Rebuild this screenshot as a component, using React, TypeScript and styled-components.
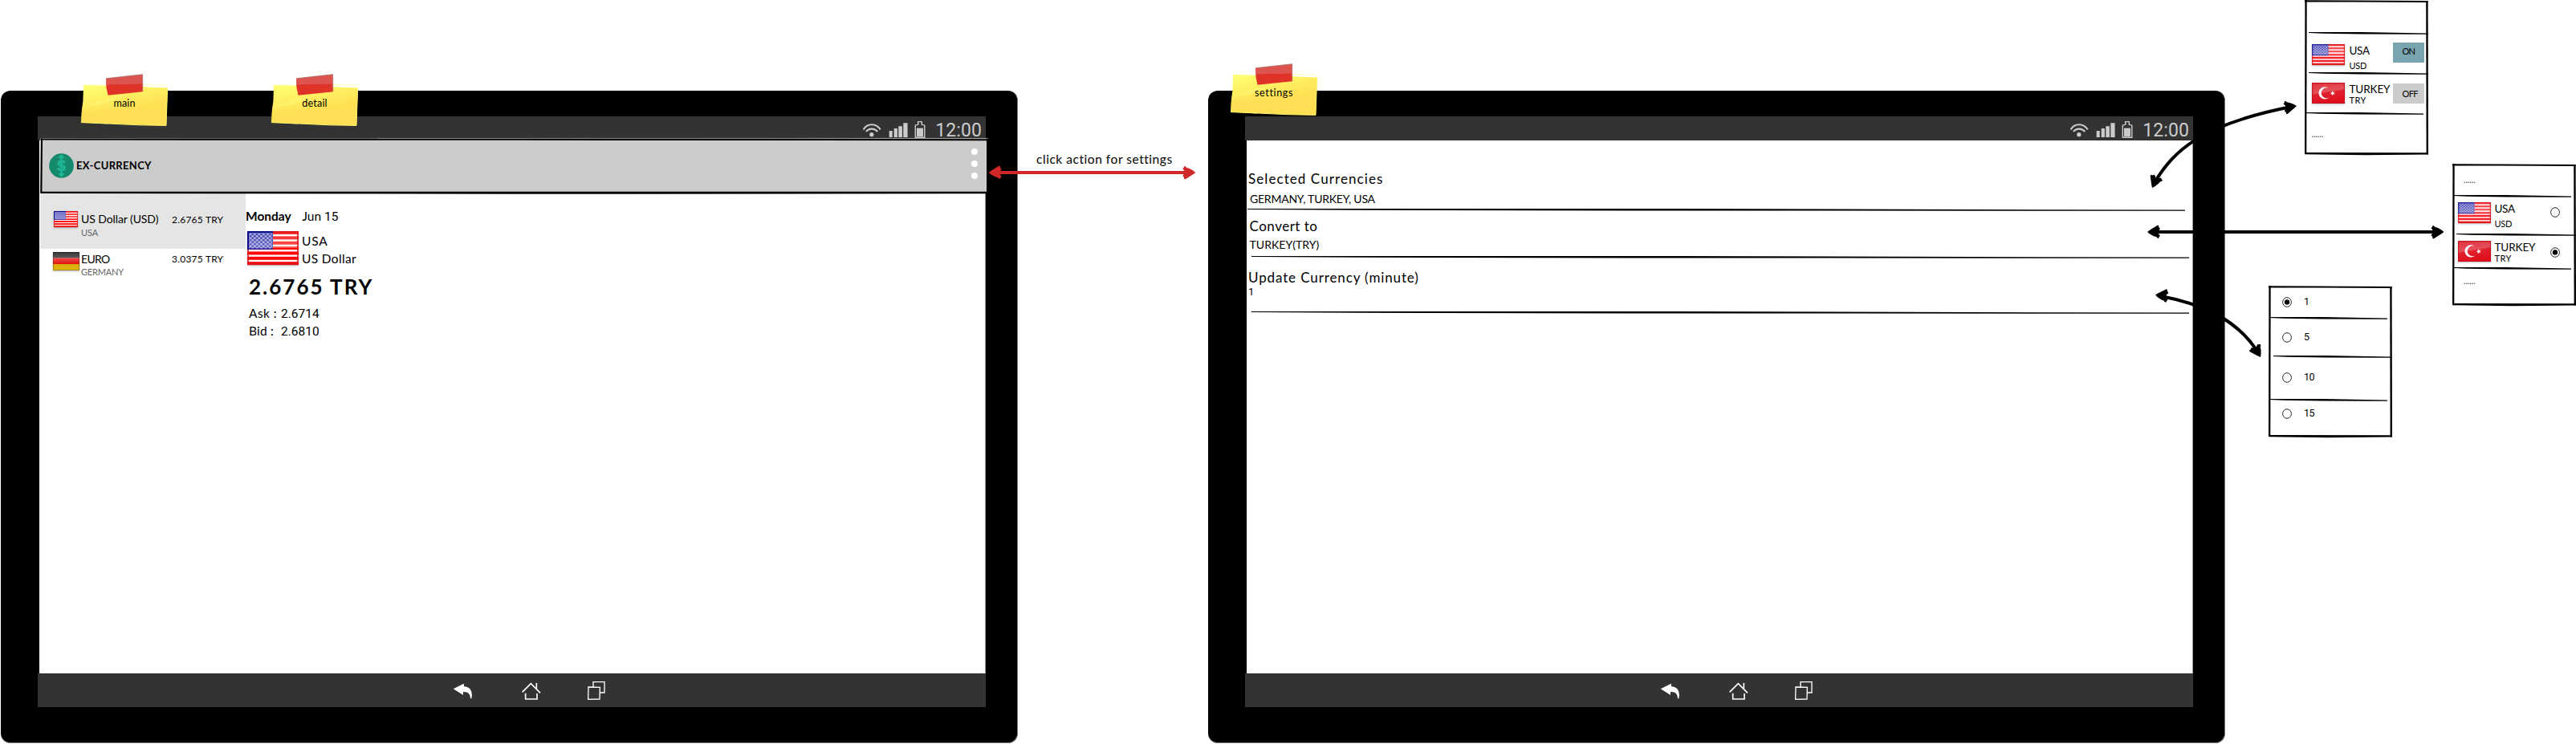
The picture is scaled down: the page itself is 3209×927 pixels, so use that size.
import React from 'react';
import styled, { createGlobalStyle } from 'styled-components';

const GlobalStyle = createGlobalStyle`
  body { margin: 0; background: #fff; }
  svg { display: block; flex: none; }
`;

/* ---------- text ---------- */

interface TextProps {
  $size: number;
  $line: number;
  $spacing?: number;
  $bold?: boolean;
  $color?: string;
  $top?: number;
  $plain?: boolean;
}

const Text = styled.span<TextProps>`
  display: block;
  flex: none;
  white-space: pre;
  font-family: ${p => (p.$plain ? 'Roboto, Lato' : 'Lato')}, sans-serif;
  font-size: ${p => p.$size}px;
  line-height: ${p => p.$line}px;
  letter-spacing: ${p => p.$spacing ?? 0}px;
  font-weight: ${p => (p.$bold ? 700 : 400)};
  color: ${p => p.$color ?? '#000'};
  margin-top: ${p => p.$top ?? 0}px;
`;

const Digits = styled.span`
  font-family: Roboto, sans-serif;
  line-height: 1;
`;

/* ---------- canvas ---------- */

const Board = styled.main`
  position: relative;
  width: 3209px;
  height: 927px;
  overflow: hidden;
  background: #fff;
`;

const Placed = styled.div<{ $x: number; $y: number }>`
  position: absolute;
  left: ${p => p.$x}px;
  top: ${p => p.$y}px;
`;

const Connectors = styled.svg`
  position: absolute;
  inset: 0;
  pointer-events: none;
`;

/* ---------- tablet ---------- */

const Tablet = styled.section`
  box-sizing: border-box;
  width: 1267px;
  height: 813px;
  padding: 32px 0 0 46px;
  border-radius: 12px;
  background: #000;
  border-right: 1px solid #777;
  border-bottom: 1px solid #777;
`;

const Screen = styled.div`
  width: 1181px;
  display: flex;
  flex-direction: column;
`;

const StatusBar = styled.header`
  height: 30px;
  box-sizing: border-box;
  padding: 2px 5px 0 0;
  display: flex;
  justify-content: flex-end;
  background: #333;
`;

const StatusIcons = styled.svg`
  margin: 2px 10px 0 0;
`;

const ScreenBody = styled.div`
  height: 664px;
  margin-left: 2px;
  box-sizing: border-box;
  background: #fff;
  border-right: 1px solid #999;
`;

const NavBar = styled.nav`
  height: 42px;
  box-sizing: border-box;
  padding: 9px 0 0 517px;
  display: flex;
  background: #333;
`;

const NavIcon = styled.svg<{ $gap: number }>`
  width: 24px;
  height: 24px;
  margin-right: ${p => p.$gap}px;
`;

function TabletFrame({ children }: { children: React.ReactNode }) {
  return (
    <Tablet>
      <Screen>
        <StatusBar>
          <StatusIcons width="80" height="25" viewBox="0 0 80 25" fill="#ccc">
            <g fill="none" stroke="#ccc" strokeWidth="2.1">
              <path d="M0.6 12.4 Q4 6.2 11 6.2 Q18 6.2 21.6 12.4" />
              <path d="M4 15 Q6.5 11.6 11 11.6 Q15.5 11.6 18.2 15" />
            </g>
            <circle cx="10.8" cy="18.7" r="2.6" />
            <path d="M32.7 14h4v8h-4zM38.7 11h4.2v11h-4.2zM44.3 8.3h4.6V22h-4.6zM50.3 4.3h5.3V22h-5.3z" />
            <path d="M65.3 22.3V7.2l3.4-1V2.6h4.6v3.6l3.5 1v15.1z" fill="none" stroke="#ccc" strokeWidth="1.4" />
            <rect x="67" y="10.6" width="8" height="10.6" />
          </StatusIcons>
          <Text $size={23} $line={31} $spacing={0.1} $plain $color="#ccc">12:00</Text>
        </StatusBar>
        <ScreenBody>{children}</ScreenBody>
        <NavBar>
          <NavIcon $gap={62} viewBox="192 84 72 72" fill="#fff">
            <path d="M194 115L234 95V106Q254 107 260 121Q266 135 262 151H258Q257 136 249 130Q242 126 231 126V138Z" />
          </NavIcon>
          <NavIcon $gap={57} viewBox="450 84 72 72" fill="none" stroke="#fff" strokeWidth="5">
            <path d="M452 127L484 95L519 130M505 93V115M464 131V153H507V132" />
          </NavIcon>
          <NavIcon $gap={0} viewBox="693 84 72 72" fill="none" stroke="#fff" strokeWidth="4">
            <path d="M717 108V89H759V129H743M699 108L742 109L741 153L698 154Z" />
          </NavIcon>
        </NavBar>
      </Screen>
    </Tablet>
  );
}

/* ---------- flags ---------- */

interface FlagProps {
  width: number;
  height: number;
}

const FlagSvg = styled.svg`
  overflow: visible;
  filter: drop-shadow(0 1.5px 1px rgba(0, 0, 0, 0.28));
`;

function UsaFlag({ width, height, soft }: FlagProps & { soft?: boolean }) {
  return (
    <FlagSvg width={width} height={height} viewBox="0 0 64 42" preserveAspectRatio="none">
      <defs>
        <pattern id="stars" width="5.4" height="5" patternUnits="userSpaceOnUse">
          <path d="M0 0h2.7v2.5H0zM2.7 2.5h2.7V5H2.7z" fill="#c3c3ef" />
        </pattern>
        <linearGradient id="gloss" x2="0" y2="1">
          <stop offset="0" stopColor="#fff" stopOpacity=".12" />
          <stop offset=".5" stopColor="#fff" stopOpacity=".3" />
          <stop offset=".5" stopColor="#fff" stopOpacity="0" />
        </linearGradient>
      </defs>
      <rect width="64" height="42" fill="#fff" />
      {[0, 1, 2, 3, 4, 5, 6].map(i => (
        <rect key={i} y={i * 6.36} width="64" height="4" fill={soft ? '#f5222a' : '#fb0a0a'} />
      ))}
      <rect width="32" height="22.8" fill="#2c2ca8" />
      <rect x="2" y="2" width="29" height="19.5" fill="url(#stars)" opacity=".7" />
      <rect width="64" height="42" fill="url(#gloss)" />
      <path d="M63 0V42M0 41H64M32 1H64M1 23V42" stroke="#d8141c" strokeWidth="1.8" opacity=".85" fill="none" />
      <path d="M1 23V1H32" stroke="#0c0c88" strokeWidth="2" opacity={soft ? 0.6 : 1} fill="none" />
    </FlagSvg>
  );
}

function GermanyFlag({ width, height }: FlagProps) {
  return (
    <FlagSvg width={width} height={height} viewBox="0 0 33 23" preserveAspectRatio="none">
      <defs>
        <linearGradient id="coal" x2="0" y2="1"><stop stopColor="#333" /><stop offset="1" stopColor="#5c5c5c" /></linearGradient>
        <linearGradient id="ruby" x2="0" y2="1"><stop stopColor="#ee4a4a" /><stop offset="1" stopColor="#e31414" /></linearGradient>
        <linearGradient id="gold" x2="0" y2="1"><stop stopColor="#d9ac00" /><stop offset="1" stopColor="#e0b81c" /></linearGradient>
      </defs>
      <rect width="33" height="7.5" fill="url(#coal)" />
      <rect y="7.4" width="33" height="7.6" fill="url(#ruby)" />
      <rect y="15" width="33" height="8" fill="url(#gold)" />
      <rect x=".5" y=".5" width="32" height="22" fill="none" stroke="#000" strokeOpacity=".25" />
    </FlagSvg>
  );
}

function TurkeyFlag({ width, height }: FlagProps) {
  return (
    <FlagSvg width={width} height={height} viewBox="0 0 41 26" preserveAspectRatio="none">
      <defs>
        <linearGradient id="crimson" x2="0.25" y2="1">
          <stop stopColor="#e0303c" />
          <stop offset=".5" stopColor="#e4525c" />
          <stop offset=".56" stopColor="#e0222f" />
          <stop offset="1" stopColor="#e0101e" />
        </linearGradient>
      </defs>
      <rect width="41" height="26" fill="url(#crimson)" />
      <rect x=".6" y=".6" width="39.8" height="24.8" fill="none" stroke="#c4101c" strokeWidth="1.2" opacity=".8" />
      <path d="M21.4 7.4A7.6 7.6 0 1 0 21.4 18.2A6.3 6.3 0 1 1 21.4 7.4Z" fill="#fff" />
      <path d="M25.4 9.9l.9 2.1 2.3-.5-1.4 1.7 1.2 1.9-2.2-.5-1.2 1.7-.4-2.2-2-.8 2-.9z" fill="#fff" />
    </FlagSvg>
  );
}

/* ---------- main screen ---------- */

const AppBar = styled.div`
  position: relative;
  box-sizing: border-box;
  height: 69px;
  width: 1179px;
  margin: -3px 0 0 1px;
  padding: 19px 11px 0 11px;
  display: flex;
  align-items: flex-start;
  background: #ccc;
`;

const AppBarOutline = styled.svg`
  position: absolute;
  left: 0;
  top: 0;
  overflow: visible;
`;

const AppTitle = styled.div`
  margin: 5px auto 0 3px;
`;

const MoreMenu = styled.div`
  margin: -6px 0 0;
  display: flex;
  flex-direction: column;
  gap: 7px;
`;

const MoreDot = styled.i`
  width: 8px;
  height: 8px;
  border-radius: 50%;
  background: #fff;
`;

const Panes = styled.div`
  display: flex;
  padding-left: 1px;
`;

const CurrencyList = styled.ul`
  margin: 0;
  padding: 0;
  width: 256px;
  list-style: none;
`;

const CurrencyRow = styled.li<{ $selected?: boolean }>`
  box-sizing: border-box;
  height: 69px;
  display: grid;
  grid-template-columns: 51px 113px auto;
  align-items: start;
  padding-top: ${p => (p.$selected ? 21 : 2)}px;
  background: ${p => (p.$selected ? '#e5e5e5' : 'transparent')};
`;

const FlagCell = styled.div<{ $left: number; $top: number }>`
  padding: ${p => p.$top}px 0 0 ${p => p.$left}px;
`;

const Detail = styled.div`
  display: flex;
  flex-direction: column;
  padding-top: 17px;
`;

const DateLine = styled.div`
  display: grid;
  grid-template-columns: 70.5px auto;
`;

const Country = styled.div`
  display: flex;
  gap: 4px;
  margin-top: 8px;
  padding-left: 2px;
`;

const Quote = styled.div`
  padding-left: 4px;
`;

const QuoteRow = styled.div`
  display: grid;
  grid-template-columns: 40px auto;
`;

function MainScreen() {
  return (
    <TabletFrame>
      <AppBar>
        <svg width="31" height="31" viewBox="0 0 31 31">
          <circle cx="15.5" cy="15.5" r="15.3" fill="#14896c" />
          <g fill="#1fb594">
            <path d="M15.5 1.2L20 6H11zM15.5 30L11 25H20z" />
            <rect x="14.2" y="4" width="2.6" height="23" />
          </g>
          <path d="M19.4 12.2Q18.6 9.8 15.4 9.8Q11.8 10 12 12.4Q12.2 14.8 15.6 15.3Q19.4 15.8 19.2 18.4Q18.8 20.9 15.4 20.9Q11.8 20.9 11.2 18.2" fill="none" stroke="#1fb594" strokeWidth="3.1" />
        </svg>
        <AppTitle>
          <Text $size={13} $line={20} $spacing={0.33} $bold>EX-CURRENCY</Text>
        </AppTitle>
        <MoreMenu><MoreDot /><MoreDot /><MoreDot /></MoreMenu>
        <AppBarOutline width="1182" height="70" viewBox="0 0 1182 70">
          <path d="M0.4 0.6L780 0.4L1181 1.2V3.2L600 2.8L0.4 2.6Z" />
          <path d="M0.6 66.8L1181 66.8V69.2L600 69.8L0.2 69Z" />
          <path d="M1 0.6L3 0.6L2.4 68H0.2Z" />
          <path d="M1179 1L1181.4 1L1181.4 69H1179.6Z" />
          <path d="M420 0.4H1181" stroke="#888" strokeWidth="0.8" />
        </AppBarOutline>
      </AppBar>
      <Panes>
        <CurrencyList>
          <CurrencyRow $selected>
            <FlagCell $left={17} $top={1}><UsaFlag width={30} height={20} /></FlagCell>
            <div>
              <Text $size={14} $line={21} $spacing={-0.09}>US Dollar (USD)</Text>
              <Text $size={11} $line={13} $spacing={-0.1} $color="#666">USA</Text>
            </div>
            <Text $size={12} $line={19} $spacing={0.22} $top={2}>2.6765 TRY</Text>
          </CurrencyRow>
          <CurrencyRow>
            <FlagCell $left={16} $top={2}><GermanyFlag width={33} height={23} /></FlagCell>
            <div>
              <Text $size={14} $line={21} $spacing={-0.7}>EURO</Text>
              <Text $size={11} $line={13} $spacing={-0.2} $top={-1} $color="#666">GERMANY</Text>
            </div>
            <Text $size={12} $line={19} $spacing={0.22} $top={1}>3.0375 TRY</Text>
          </CurrencyRow>
        </CurrencyList>
        <Detail>
          <DateLine>
            <Text $size={15.5} $line={22} $bold>Monday</Text>
            <Text $size={15.5} $line={22}>Jun <Digits>15</Digits></Text>
          </DateLine>
          <Country>
            <UsaFlag width={64} height={42} />
            <div>
              <Text $size={15.5} $line={22} $spacing={0.8} $top={1}>USA</Text>
              <Text $size={15.5} $line={22} $spacing={0.34}>US Dollar</Text>
            </div>
          </Country>
          <Quote>
            <Text $size={26} $line={30} $spacing={2} $bold $top={9}>2.6765 TRY</Text>
            <QuoteRow>
              <Text $size={15.5} $line={22} $spacing={0.45} $top={7}>Ask :</Text>
              <Text $size={15.5} $line={22} $top={7}><Digits>2.6714</Digits></Text>
            </QuoteRow>
            <QuoteRow>
              <Text $size={15.5} $line={22} $spacing={0.19}>Bid :</Text>
              <Text $size={15.5} $line={22}><Digits>2.6810</Digits></Text>
            </QuoteRow>
          </Quote>
        </Detail>
      </Panes>
    </TabletFrame>
  );
}

/* ---------- settings screen ---------- */

const RuleSvg = styled.svg<{ $indent: number; $top: number }>`
  margin: ${p => p.$top}px 0 0 ${p => p.$indent}px;
  overflow: visible;
`;

function Rule({ width, indent = 0, top = 0 }: { width: number; indent?: number; top?: number }) {
  const w = width;
  return (
    <RuleSvg $indent={indent} $top={top} width={w} height="5" viewBox={`0 0 ${w} 5`}>
      <path d={`M0 1L${w * 0.45} 1L${w} 2.6V3.8L${w * 0.45} 3.5L${w * 0.12} 2.8L0 2Z`} />
    </RuleSvg>
  );
}

const Settings = styled.div`
  padding: 36px 0 0 2px;
`;

const Setting = styled.div<{ $top?: number; $indent?: number }>`
  padding: ${p => p.$top ?? 0}px 0 0 ${p => p.$indent ?? 0}px;
`;

function SettingsScreen() {
  return (
    <TabletFrame>
      <Settings>
        <Setting>
          <Text $size={17} $line={23} $spacing={1.08}>Selected Currencies</Text>
        </Setting>
        <Setting $indent={2} $top={3}>
          <Text $size={14} $line={21} $spacing={-0.23}>GERMANY, TURKEY, USA</Text>
        </Setting>
        <Rule width={1168} indent={-1} top={1} />
        <Setting $indent={1.5} $top={6}>
          <Text $size={17} $line={23} $spacing={0.5}>Convert to</Text>
          <Text $size={14} $line={21} $spacing={0.04} $top={1}>TURKEY(TRY)</Text>
        </Setting>
        <Rule width={1168} indent={4} top={3} />
        <Setting $top={11}>
          <Text $size={17} $line={23} $spacing={0.88}>Update Currency (minute)</Text>
          <Text $size={13} $line={21} $plain $top={-4}>1</Text>
        </Setting>
        <Rule width={1168} indent={4} top={13} />
      </Settings>
    </TabletFrame>
  );
}

/* ---------- popups ---------- */

const Popup = styled.section<{ $height: number }>`
  position: relative;
  width: 154px;
  height: ${p => p.$height}px;
  background: #fff;
`;

const PopupOutline = styled.svg`
  position: absolute;
  inset: 0;
  overflow: visible;
`;

function PopupFrame({ height: h, children }: { height: number; children: React.ReactNode }) {
  return (
    <Popup $height={h}>
      {children}
      <PopupOutline width="154" height={h} viewBox={`0 0 154 ${h}`}>
        <path d={`M0 0.2L60 0.6L153.6 1V2.9L60 2.6L0 2.6Z`} />
        <path d={`M0.3 ${h - 3}L153.6 ${h - 2.8}V${h - 0.4}L75 ${h + 0.2}L0 ${h - 0.8}Z`} />
        <path d={`M0.4 0H2.7L2.3 ${h - 1}H0Z`} />
        <path d={`M151.2 1H153.6L154 ${h - 0.6}H151.6Z`} />
      </PopupOutline>
    </Popup>
  );
}

const PopupRow = styled.div<{ $height: number; $left?: number }>`
  box-sizing: border-box;
  height: ${p => p.$height}px;
  padding-left: ${p => p.$left ?? 0}px;
  display: flex;
  align-items: flex-start;
`;

const PopupCell = styled.div<{ $top: number; $width?: number }>`
  box-sizing: border-box;
  flex: none;
  padding-top: ${p => p.$top}px;
  width: ${p => (p.$width ? `${p.$width}px` : 'auto')};
`;

const Toggle = styled.div<{ $on?: boolean }>`
  box-sizing: border-box;
  width: 39px;
  height: 25px;
  padding: ${p => (p.$on ? 4 : 6)}px 0 0 11.5px;
  background: ${p => (p.$on ? '#78a5b0' : '#ccc')};
`;

function Radio({ checked }: { checked?: boolean }) {
  return (
    <svg width="12" height="13" viewBox="0 0 12 13">
      <ellipse cx="6" cy="6.5" rx="5.4" ry="5.8" fill="#fff" stroke="#111" strokeWidth="0.9" />
      {checked && <circle cx="6" cy="6.4" r="3.2" />}
    </svg>
  );
}

function Dots() {
  return <Text $size={10.5} $line={13} $spacing={-0.05} $color="#444">......</Text>;
}

function UsaText() {
  return (
    <>
      <Text $size={13.5} $line={20} $spacing={-0.35}>USA</Text>
      <Text $size={11} $line={13} $spacing={-0.3} $top={2}>USD</Text>
    </>
  );
}

function TurkeyText() {
  return (
    <>
      <Text $size={13.5} $line={20} $spacing={-0.1}>TURKEY</Text>
      <Text $size={11} $line={13} $spacing={0.4} $top={-3}>TRY</Text>
    </>
  );
}

function TogglePopup() {
  return (
    <PopupFrame height={193}>
      <PopupRow $height={39} />
      <Rule width={149} indent={5} />
      <PopupRow $height={45} $left={9}>
        <PopupCell $top={11} $width={46.5}><UsaFlag width={41} height={26} soft /></PopupCell>
        <PopupCell $top={9} $width={54.5}><UsaText /></PopupCell>
        <PopupCell $top={9}>
          <Toggle $on><Text $size={11} $line={13} $spacing={-0.9}>ON</Text></Toggle>
        </PopupCell>
      </PopupRow>
      <Rule width={149} indent={5} />
      <PopupRow $height={45} $left={9}>
        <PopupCell $top={9} $width={46.5}><TurkeyFlag width={41} height={26} /></PopupCell>
        <PopupCell $top={7} $width={54.5}><TurkeyText /></PopupCell>
        <PopupCell $top={10}>
          <Toggle><Text $size={11} $line={13} $spacing={-0.6}>OFF</Text></Toggle>
        </PopupCell>
      </PopupRow>
      <Rule width={147} indent={1} />
      <PopupRow $height={40} $left={8.5}>
        <PopupCell $top={17}><Dots /></PopupCell>
      </PopupRow>
    </PopupFrame>
  );
}

function RadioCountryPopup() {
  return (
    <PopupFrame height={177}>
      <PopupRow $height={38} $left={14}>
        <PopupCell $top={14}><Dots /></PopupCell>
      </PopupRow>
      <Rule width={147} indent={1} />
      <PopupRow $height={43} $left={6.5}>
        <PopupCell $top={5} $width={46}><UsaFlag width={41} height={26} soft /></PopupCell>
        <PopupCell $top={3} $width={69.5}><UsaText /></PopupCell>
        <PopupCell $top={11}><Radio /></PopupCell>
      </PopupRow>
      <Rule width={149} indent={5} />
      <PopupRow $height={37} $left={6.5}>
        <PopupCell $top={5} $width={46}><TurkeyFlag width={41} height={26} /></PopupCell>
        <PopupCell $top={3} $width={69.5}><TurkeyText /></PopupCell>
        <PopupCell $top={13}><Radio checked /></PopupCell>
      </PopupRow>
      <Rule width={147} indent={1} />
      <PopupRow $height={40} $left={14}>
        <PopupCell $top={7}><Dots /></PopupCell>
      </PopupRow>
    </PopupFrame>
  );
}

const intervals = [
  { value: '1', height: 38, top: 9, checked: true },
  { value: '5', height: 43, top: 10 },
  { value: '10', height: 49, top: 12 },
  { value: '15', height: 40, top: 3 },
];

function IntervalPopup() {
  return (
    <PopupFrame height={189}>
      {intervals.map((it, i) => (
        <React.Fragment key={it.value}>
          {i > 0 && <Rule width={147} indent={i === 2 ? 6 : 1} />}
          <PopupRow $height={it.height} $left={17}>
            <PopupCell $top={it.top + 5} $width={27}><Radio checked={it.checked} /></PopupCell>
            <PopupCell $top={it.top}>
              <Text $size={12.5} $line={21} $spacing={-0.5} $plain>{it.value}</Text>
            </PopupCell>
          </PopupRow>
        </React.Fragment>
      ))}
    </PopupFrame>
  );
}

/* ---------- sticky notes ---------- */

const Note = styled.div`
  position: relative;
  box-sizing: border-box;
  width: 108px;
  height: 50px;
  padding-top: 13px;
  display: flex;
  justify-content: center;
`;

const NotePaper = styled.svg`
  position: absolute;
  inset: 0;
  overflow: visible;
`;

const NoteText = styled(Text)`
  position: relative;
`;

function StickyNote({ label, spacing }: { label: string; spacing: number }) {
  return (
    <Note>
      <NotePaper width="108" height="50" viewBox="0 0 108 50">
        <defs>
          <linearGradient id="paper" x1="0.15" y1="0" x2="0.5" y2="0.9">
            <stop offset="0" stopColor="#ffff73" />
            <stop offset=".4" stopColor="#ffee60" />
            <stop offset=".7" stopColor="#ffe254" />
          </linearGradient>
        </defs>
        <path d="M3 0L30 0.4L60 1.6L108 3.5L107 24L106 50.4L72 49.4L34 47.8L33 48.4L0 46.6L1 30L2.4 20Z" fill="url(#paper)" />
        <path d="M1 31L50 29L106 25L106 50L60 49L0 46.4Z" fill="#ffe055" opacity=".7" />
        <path d="M4 26L32 17L60 12L18 26Z" fill="#ffff8a" opacity=".35" />
        <path d="M76 -0.4L106 0" stroke="#ffff9a" strokeWidth="0.7" />
        <path d="M0 46.6L34 48L72 49.8L106 50.4L107.6 4" fill="none" stroke="#fff36e" strokeWidth="1" />
        <path d="M31.3 -8.3L76.6 -13.3L77 8.2L33.6 12.8L31.4 3Z" fill="#e03328" />
        <path d="M31.3 -8.3L76.6 -13.3L76.8 -1.4L31.4 -0.6Z" fill="#dc544d" />
        <path d="M31.3 -8.3L76.6 -13.3L76.8 8" fill="none" stroke="#a9807c" strokeWidth="0.8" />
      </NotePaper>
      <NoteText $size={12.6} $line={19} $spacing={spacing}>{label}</NoteText>
    </Note>
  );
}

/* ---------- arrows ---------- */

function ArrowHead({ x, y, angle }: { x: number; y: number; angle: number }) {
  return (
    <path
      transform={`translate(${x} ${y}) rotate(${angle})`}
      stroke="none"
      d="M0 0L3 -2.2L13 -8.4L14.2 -7.8L14.4 -5.6L16 -4.6L15 -2.4L13.6 -1.6L13.6 1.8L14.6 3L16 5L14.6 6L14.2 8L12.4 7.6L11 6L8 5.2L3 2.4Z"
    />
  );
}

export default function App() {
  return (
    <>
      <GlobalStyle />
      <Board>
        <Placed $x={1} $y={113}><MainScreen /></Placed>
        <Placed $x={1505} $y={113}><SettingsScreen /></Placed>

        <Placed $x={2871} $y={0}><TogglePopup /></Placed>
        <Placed $x={3055} $y={204}><RadioCountryPopup /></Placed>
        <Placed $x={2826} $y={356}><IntervalPopup /></Placed>

        <Placed $x={101} $y={106}><StickyNote label="main" spacing={0.12} /></Placed>
        <Placed $x={338} $y={106}><StickyNote label="detail" spacing={0.17} /></Placed>
        <Placed $x={1533} $y={93}><StickyNote label="settings" spacing={0.6} /></Placed>

        <Placed $x={1291} $y={187}>
          <Text $size={15.5} $line={22} $spacing={0.54}>click action for settings</Text>
        </Placed>

        <Connectors width="3209" height="927" viewBox="0 0 3209 927" fill="none">
          <g stroke="#d02828" fill="#d02828" strokeWidth="4">
            <path d="M1242 215H1480" />
            <ArrowHead x={1231.7} y={215} angle={0} />
            <ArrowHead x={1489.3} y={215} angle={180} />
          </g>
          <g stroke="#000" strokeWidth="4">
            <path d="M2685 289H3035" />
            <path d="M2686 224C2708 190 2738 156 2854 133" />
            <path d="M2692 369C2740 378 2784 396 2811 436" />
            <g fill="#000">
              <ArrowHead x={2675} y={289} angle={0} />
              <ArrowHead x={3044.5} y={289} angle={180} />
              <ArrowHead x={2681} y={234} angle={-66} />
              <ArrowHead x={2861} y={132} angle={172} />
              <ArrowHead x={2685} y={367.5} angle={5} />
              <ArrowHead x={2816} y={445} angle={240} />
            </g>
          </g>
        </Connectors>
      </Board>
    </>
  );
}
